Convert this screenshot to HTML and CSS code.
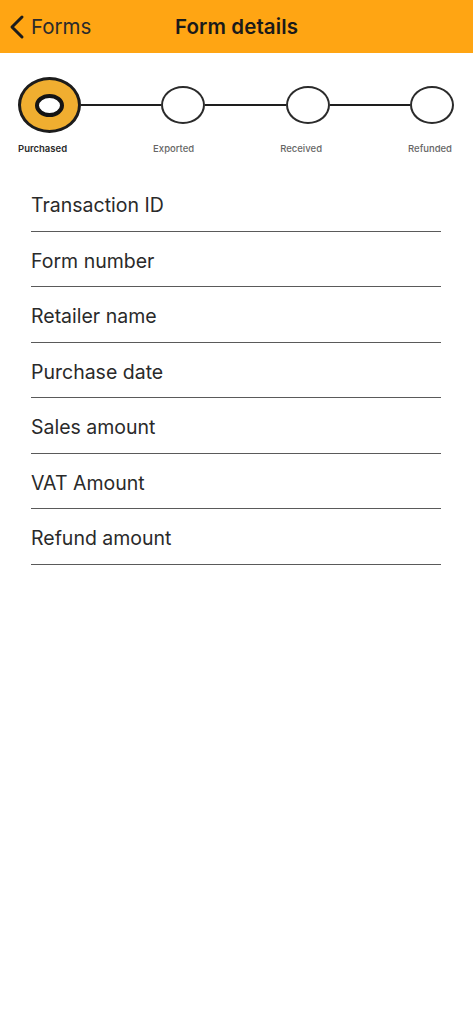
FILE: index.html
```html
<!DOCTYPE html>
<html>
<head>
<meta charset="utf-8">
<link rel="stylesheet" href="styles.css">
</head>
<body>
<header class="topbar">
  <a class="back">
    <svg class="chev" width="18" height="26" viewBox="0 0 18 26"><path d="M14 3 L4 13 L14 23" fill="none" stroke="#1c1c1c" stroke-width="3" stroke-linecap="round" stroke-linejoin="round"/></svg>
    <span>Forms</span>
  </a>
  <h1 class="title">Form details</h1>
  <span></span>
</header>
<section class="stepper">
  <div class="track">
    <div class="dot active"><div class="hole"></div></div>
    <div class="seg"></div>
    <div class="dot"></div>
    <div class="seg"></div>
    <div class="dot"></div>
    <div class="seg"></div>
    <div class="dot"></div>
  </div>
  <div class="labels">
    <span class="lbl current">Purchased</span>
    <span class="lbl">Exported</span>
    <span class="lbl">Received</span>
    <span class="lbl">Refunded</span>
  </div>
</section>
<section class="fields">
  <div class="field">Transaction ID</div>
  <div class="field">Form number</div>
  <div class="field">Retailer name</div>
  <div class="field">Purchase date</div>
  <div class="field">Sales amount</div>
  <div class="field">VAT Amount</div>
  <div class="field">Refund amount</div>
</section>
</body>
</html>
```

FILE: styles.css
```css
html, body {
  margin: 0;
  padding: 0;
  background: #fff;
  font-family: Inter, "Liberation Sans", sans-serif;
  color: #2a2a2a;
}
.topbar {
  height: 53px;
  background: #ffa513;
  display: grid;
  grid-template-columns: 1fr auto 1fr;
  align-items: center;
}
.back {
  display: flex;
  align-items: center;
  padding-left: 8px;
  font-size: 20.5px;
  color: #2b2b2b;
}
.chev { margin-right: 5px; margin-top: 1px; }
.title {
  margin: 0;
  font-size: 20.5px;
  font-weight: 600;
  color: #1a1a1a;
  letter-spacing: 0.1px;
}
.stepper {
  padding-top: 24px;
}
.track {
  display: flex;
  align-items: center;
  margin: 0 19px 0 18px;
  height: 56px;
}
.seg {
  flex: 1;
  height: 2px;
  background: #1e1e1e;
}
.dot {
  width: 40px;
  height: 34px;
  border: 2.5px solid #2b2b2b;
  border-radius: 50%;
  background: #fff;
  flex: none;
}
.dot.active {
  width: 57px;
  height: 50px;
  border-width: 3px;
  border-color: #1c1c1c;
  background: #f0ae30;
  display: flex;
  align-items: center;
  justify-content: center;
}
.hole {
  width: 21px;
  height: 15px;
  border: 4px solid #141414;
  border-radius: 50%;
  background: #fff;
}
.labels {
  display: flex;
  justify-content: space-between;
  margin: 10px 21px 0 18px;
  font-size: 9.5px;
  line-height: 12px;
}
.lbl {
  color: #666;
  font-weight: 500;
}
.lbl.current {
  color: #2a2a2a;
  font-weight: 600;
}
.fields {
  margin: 21px 32px 0 31px;
}
.field {
  box-sizing: border-box;
  height: 55.5px;
  padding-top: 17px;
  line-height: 24px;
  font-size: 19.5px;
  color: #2a2a2a;
  border-bottom: 1px solid #5a5a5a;
}
```
